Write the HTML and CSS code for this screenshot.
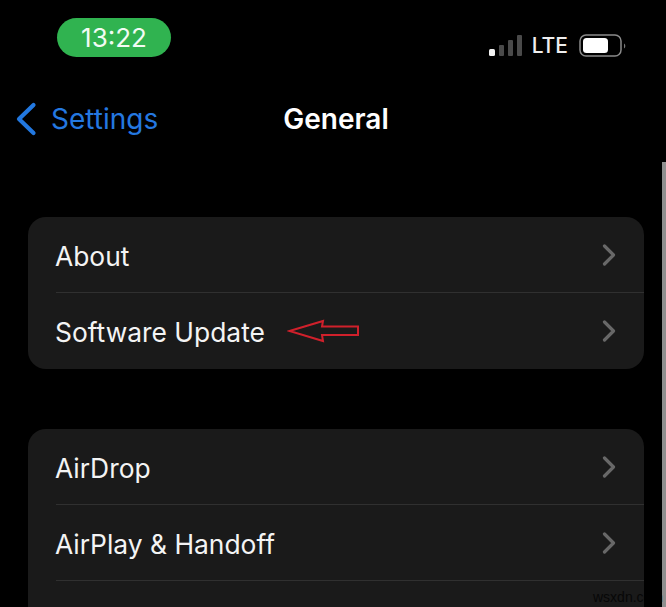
FILE: index.html
```html
<!DOCTYPE html>
<html lang="en">
<head>
<meta charset="utf-8">
<title>General</title>
<link rel="stylesheet" href="styles.css">
</head>
<body>
<div class="screen">
  <div class="status">
    <div class="pill">13:22</div>
    <div class="status-right">
      <svg class="signal" width="34" height="22" viewBox="0 0 34 22">
        <rect x="0" y="14" width="6" height="7" rx="1.500" fill="#f2f2f2"/>
        <rect x="10" y="10" width="5" height="11" rx="1" fill="#4a4a4a"/>
        <rect x="19" y="5" width="5" height="16" rx="1" fill="#4a4a4a"/>
        <rect x="28" y="0" width="5" height="21" rx="1" fill="#4a4a4a"/>
      </svg>
      <span class="lte">LTE</span>
      <svg class="battery" width="47" height="24" viewBox="0 0 47 24">
        <rect x="1" y="1" width="41" height="21" rx="6" fill="none" stroke="#8a8a8a" stroke-width="1.500"/>
        <rect x="4" y="4" width="25" height="15" rx="3.500" fill="#fff"/>
        <path d="M45 9.500a3 3 0 0 1 0 5z" fill="#777"/>
      </svg>
    </div>
  </div>
  <div class="nav">
    <div class="back">
      <svg width="22" height="34" viewBox="0 0 22 34"><path d="M18.500 3 L4 17 L18.500 31" fill="none" stroke="#2278e0" stroke-width="4.200" stroke-linecap="round" stroke-linejoin="round"/></svg>
      <span>Settings</span>
    </div>
    <div class="title">General</div>
  </div>
  <div class="card">
    <div class="row"><span class="label">About</span><svg class="chev" width="14" height="22" viewBox="0 0 14 22"><path d="M2.500 2 L11.500 11 L2.500 20" fill="none" stroke="#686868" stroke-width="3.200" stroke-linecap="round" stroke-linejoin="round"/></svg></div>
    <div class="row">
      <span class="label">Software Update</span>
      <svg class="arrow" width="74" height="24" viewBox="0 0 74 24"><path d="M2.500 12 L36 2 L35 7.500 L71 7.500 L71 16 L35 16 L36 22 Z" fill="none" stroke="#d0202b" stroke-width="2" stroke-linejoin="miter"/></svg>
      <svg class="chev" width="14" height="22" viewBox="0 0 14 22"><path d="M2.500 2 L11.500 11 L2.500 20" fill="none" stroke="#686868" stroke-width="3.200" stroke-linecap="round" stroke-linejoin="round"/></svg>
    </div>
  </div>
  <div class="card">
    <div class="row"><span class="label">AirDrop</span><svg class="chev" width="14" height="22" viewBox="0 0 14 22"><path d="M2.500 2 L11.500 11 L2.500 20" fill="none" stroke="#686868" stroke-width="3.200" stroke-linecap="round" stroke-linejoin="round"/></svg></div>
    <div class="row"><span class="label">AirPlay &amp; Handoff</span><svg class="chev" width="14" height="22" viewBox="0 0 14 22"><path d="M2.500 2 L11.500 11 L2.500 20" fill="none" stroke="#686868" stroke-width="3.200" stroke-linecap="round" stroke-linejoin="round"/></svg></div>
    <div class="row"></div>
  </div>
  <div class="scrollbar"></div>
  <div class="watermark">wsxdn.com</div>
</div>
</body>
</html>
```

FILE: styles.css
```css
* { box-sizing: border-box; }
html, body { margin: 0; background: #000; }
.screen {
  position: relative;
  width: 666px;
  height: 607px;
  overflow: hidden;
  background: #000;
  font-family: Inter, "Liberation Sans", sans-serif;
  color: #f4f4f4;
}
.status {
  display: flex;
  justify-content: space-between;
  align-items: flex-start;
  height: 86px;
  padding: 18px 40px 0 57px;
}
.pill {
  width: 114px;
  height: 39px;
  border-radius: 20px;
  background: #30b350;
  color: #f2fbf4;
  font-size: 26px;
  line-height: 40px;
  text-align: center;
}
.status-right {
  display: flex;
  align-items: center;
  gap: 9px;
  padding-top: 16px;
}
.lte { font-size: 21px; font-weight: 500; line-height: 24px; color: #eee; }
.battery { margin-left: 2px; }
.nav {
  position: relative;
  display: flex;
  align-items: center;
  justify-content: center;
  height: 66px;
}
.back {
  position: absolute;
  left: 15px;
  top: 0;
  height: 66px;
  display: flex;
  align-items: center;
  gap: 14px;
  color: #2478e0;
  font-size: 28px;
}
.title { font-size: 28px; font-weight: 600; color: #fff; margin-left: 6px; }
.card {
  position: relative;
  margin: 65px 22px 0 28px;
  background: #1a1a1a;
  border-radius: 18px;
  overflow: hidden;
}
.card + .card { margin-top: 60px; }
.row {
  position: relative;
  display: flex;
  align-items: center;
  height: 76px;
  padding: 0 28px;
  font-size: 26.400px;
  line-height: 32px;
}
.label { margin-left: -1px; padding-top: 2px; }
.row + .row::before {
  content: "";
  position: absolute;
  top: -1px;
  left: 28px;
  right: 0;
  height: 1px;
  background: #303030;
}
.chev { margin-left: auto; }
.arrow { margin-left: 22px; }
.scrollbar {
  position: absolute;
  top: 162px;
  right: 0;
  bottom: 0;
  width: 4px;
  background: #8f8f8f;
}
.watermark {
  position: absolute;
  left: 593px;
  top: 587px;
  font-family: "Liberation Sans", sans-serif;
  font-size: 14px;
  line-height: 20px;
  color: #000;
  opacity: .7;
}
```
